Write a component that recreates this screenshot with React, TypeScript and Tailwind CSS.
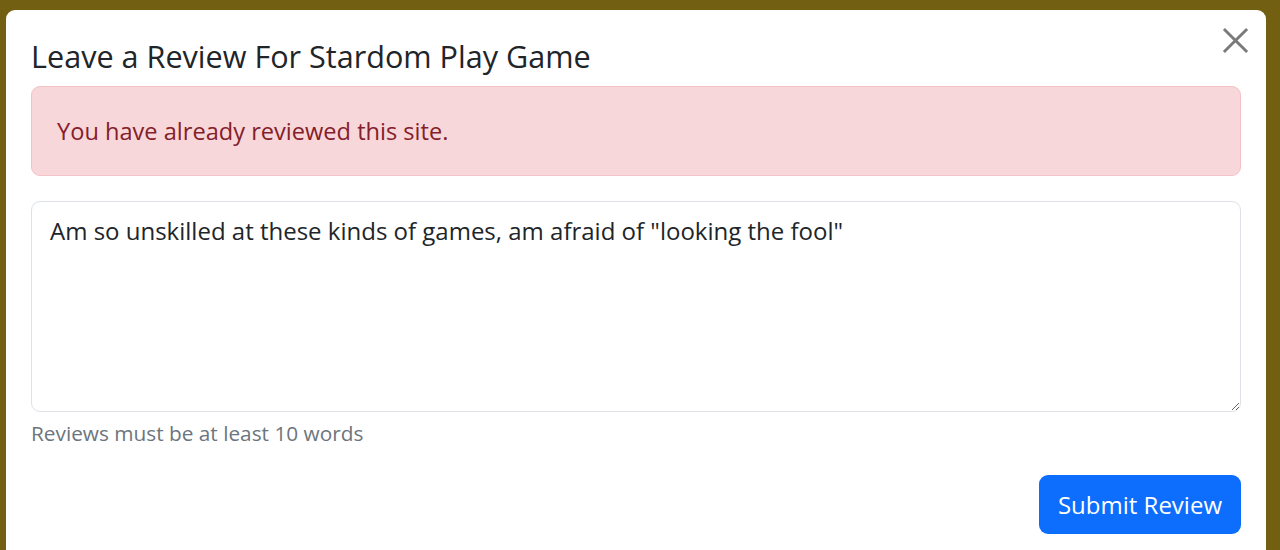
export default function App() {
  return (
    <div
      className="h-[550px] w-full overflow-hidden bg-[#735f12] pl-[6px] pr-[14px] pt-[10px]"
      style={{ fontFamily: '"Open Sans", "Noto Sans", sans-serif' }}
    >
      <div className="h-[600px] rounded-[9px] bg-white">
        <div className="flex items-start justify-between pl-[25px] pr-[16px] pt-[27px]">
          <h5 className="text-[30.6px] font-medium leading-[38px] text-[#212529]">
            Leave a Review For Stardom Play Game
          </h5>
          <button className="-mt-[12px] flex h-[30px] w-[30px] items-center justify-center text-[#7a7a7a]">
            <svg width="27" height="27" viewBox="0 0 28 28" fill="none" stroke="currentColor" strokeWidth="3">
              <path d="M2 2 L26 26 M26 2 L2 26" />
            </svg>
          </button>
        </div>
        <div className="px-[25px] pt-[11px]">
          <div className="rounded-[9px] border border-[#f5c2c7] bg-[#f8d7da] px-[25px] py-[26px] text-[23.6px] leading-[36px] text-[#842029]">
            You have already reviewed this site.
          </div>
          <textarea
            className="mt-[25px] block h-[211px] w-full resize-y rounded-[9px] border border-[#dee2e6] px-[18px] py-[11px] text-[24px] leading-[36px] text-[#212529] outline-none"
            defaultValue={'Am so unskilled at these kinds of games, am afraid of "looking the fool"'}
          />
          <div className="mt-[6px] text-[20.8px] leading-[30px] text-[#6c757d]">
            Reviews must be at least 10 words
          </div>
          <div className="mt-[27px] flex justify-end">
            <button className="h-[59px] rounded-[9px] bg-[#0d6efd] px-[19px] text-[24px] text-white">
              Submit Review
            </button>
          </div>
        </div>
      </div>
    </div>
  );
}
